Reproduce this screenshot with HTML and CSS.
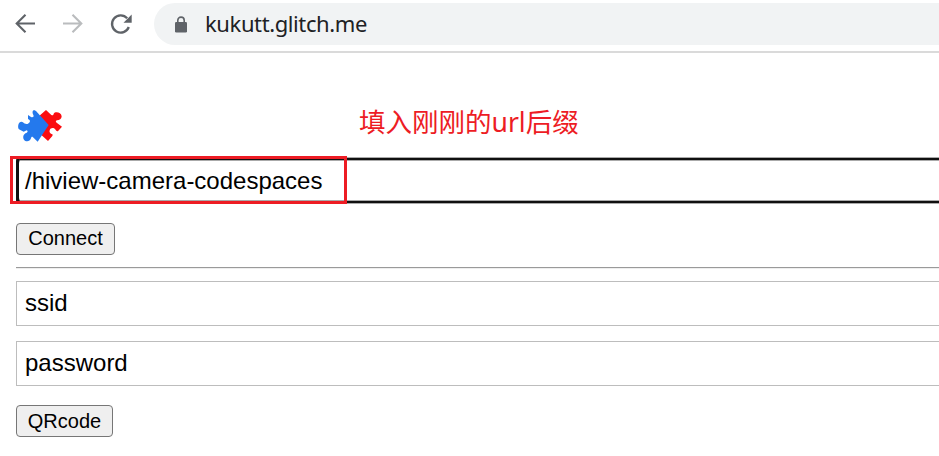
FILE: index.html
```html
<!DOCTYPE html>
<html lang="zh">
<head>
<meta charset="utf-8">
<title>kukutt.glitch.me</title>
<link rel="stylesheet" href="styles.css">
</head>
<body>
<header class="toolbar">
  <svg class="nav-icons" width="154" height="51" viewBox="0 0 154 51" fill="none" stroke="#5f6368" stroke-width="2.1">
    <path d="M35 23.500H17M25.500 14.700L16.700 23.500L25.500 32.300"/>
    <path stroke="#babcbe" d="M63 23.500H81M72.500 14.700L81.300 23.500L72.500 32.300"/>
    <path stroke-width="2.3" d="M127.200 18.300A8.640 8.640 0 1 0 128.800 27"/>
    <path fill="#5f6368" stroke="none" d="M131.700 14.500V22.700H123.500Z"/>
  </svg>
  <div class="address">
    <svg class="lock" width="14" height="18" viewBox="0 0 14 18">
      <path d="M3.800 7V4.300a3.200 3.200 0 0 1 6.400 0V7" fill="none" stroke="#5f6368" stroke-width="1.600"/>
      <rect x="1" y="6" width="12" height="10.500" rx="1.300" fill="#5f6368"/>
    </svg>
    <span class="url">kukutt.glitch.me</span>
  </div>
</header>
<main class="page">
  <div class="heading">
    <svg class="logo" width="60" height="50" viewBox="0 0 180 150">
      <path fill="#fb0d10" d="M90 46L108 30L124 45C128 47 130 46 131 41C136 33 154 37 155 49C155 57 148 61 141 61C136 63 137 66 140 68L156 80L145 92C141 95 139 93 137 90C132 81 121 83 119 91C117 98 121 101 127 103C129 105 128 107 125 110L114 123L90 101Z"/>
      <path fill="#2479ed" d="M54 45L63 51C69 53 73 50 70 45C66 37 67 33 72 30L78 33L116 75L83 125L69 112C66 109 64 111 63 115C60 125 47 126 42 119C37 111 41 101 49 99C54 97 54 93 50 91L41 95L27 88C24 85 24 79 25 74C27 66 34 63 39 67C43 71 49 74 54 71C62 67 62 60 54 57Z"/>
    </svg>
    <span class="note">填入刚刚的<span class="latin">url</span>后缀</span>
  </div>
  <div class="field focused">/hiview-camera-codespaces<span class="marker"></span></div>
  <button class="button connect">Connect</button>
  <div class="rule"></div>
  <div class="field">ssid</div>
  <div class="field password">password</div>
  <button class="button qrcode">QRcode</button>
</main>
</body>
</html>
```
FILE: styles.css
```css
* {
  box-sizing: border-box;
}

body {
  margin: 0;
  height: 456px;
  overflow: hidden;
  background: #fff;
  color: #000;
  font-family: "Liberation Sans", Arial, sans-serif;
}

.toolbar {
  display: flex;
  height: 53px;
  border-bottom: 2px solid #dadada;
}

.nav-icons {
  flex: none;
}

.address {
  display: flex;
  flex: 1;
  align-items: center;
  height: 42px;
  margin-top: 3px;
  padding-left: 20px;
  border-radius: 21px 0 0 21px;
  background: #f1f3f4;
}

.lock {
  flex: none;
  margin-top: 2px;
  margin-right: 17px;
}

.url {
  padding-bottom: 2px;
  color: #202124;
  font: 22px/40px "Noto Sans", sans-serif;
  letter-spacing: -0.4px;
  white-space: nowrap;
}

.page {
  padding-left: 16px;
}

.heading {
  display: flex;
  height: 104px;
  padding-top: 47px;
}

.logo {
  flex: none;
  margin-left: -6px;
}

.note {
  margin-left: 289px;
  color: #ed1c24;
  font: 26.5px/42px "Noto Sans CJK SC", sans-serif;
  white-space: nowrap;
}

.latin {
  font-family: "Noto Sans", sans-serif;
}

.field {
  height: 45px;
  padding-left: 8px;
  border: 1px solid #bdbdbd;
  border-right: 0;
  font-size: 24px;
  line-height: 42px;
  white-space: nowrap;
}

.focused {
  position: relative;
  height: 47px;
  padding-left: 6px;
  border: 3px solid #101010;
  border-width: 1px 0 1px 3px;
  border-color: #aaa #101010;
  border-radius: 4px 0 0 4px;
  box-shadow: inset 0 2px #101010, inset 0 -2px #101010, inset 0 3px #aaa, inset 0 -3px #aaa;
  line-height: 46px;
}

.marker {
  position: absolute;
  top: -2px;
  left: -9px;
  width: 337px;
  height: 48px;
  border: 3px solid #ed1c24;
}

.button {
  display: block;
  height: 32px;
  padding: 0;
  border: 1px solid #767676;
  border-radius: 4px;
  background: #efefef;
  color: #000;
  font: 20px/30px "Liberation Sans", Arial, sans-serif;
}

.connect {
  width: 99px;
  margin-top: 19px;
  padding-bottom: 2px;
  line-height: 28px;
}

.rule {
  height: 2px;
  margin: 12px 0;
  border-top: 1px solid #9a9a9a;
  background: #eee;
}

.password {
  margin-top: 15px;
}

.qrcode {
  width: 97px;
  margin-top: 19px;
}
```
